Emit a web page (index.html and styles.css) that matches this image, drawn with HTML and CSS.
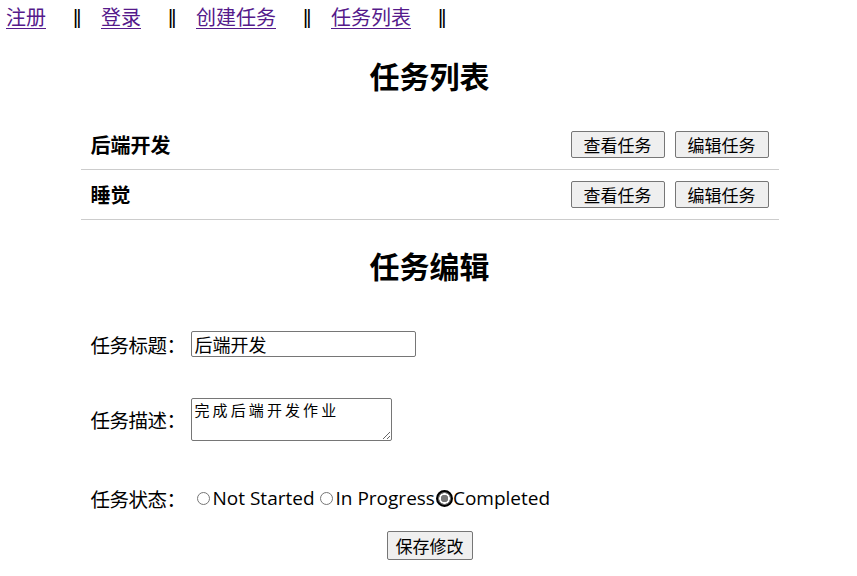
FILE: index.html
```html
<!DOCTYPE html>
<html lang="zh">
<head>
<meta charset="utf-8">
<title>任务</title>
<link rel="stylesheet" href="styles.css">
</head>
<body>
<nav class="nav">
  <a href="#" class="nav-link">注册</a><span class="sep">||</span>
  <a href="#" class="nav-link">登录</a><span class="sep">||</span>
  <a href="#" class="nav-link">创建任务</a><span class="sep">||</span>
  <a href="#" class="nav-link">任务列表</a><span class="sep">||</span>
</nav>
<main class="main">
  <h2 class="title">任务列表</h2>
  <ul class="task-list">
    <li class="task-row">
      <span class="task-name">后端开发</span>
      <span class="actions"><button class="btn">查看任务</button><button class="btn">编辑任务</button></span>
    </li>
    <li class="task-row">
      <span class="task-name">睡觉</span>
      <span class="actions"><button class="btn">查看任务</button><button class="btn">编辑任务</button></span>
    </li>
  </ul>
  <h2 class="title title-edit">任务编辑</h2>
  <form class="form">
    <div class="field">
      <label class="label">任务标题：</label>
      <input class="input" type="text" value="后端开发">
    </div>
    <div class="field field-desc">
      <label class="label">任务描述：</label>
      <textarea class="textarea">完成后端开发作业</textarea>
    </div>
    <div class="field field-status">
      <label class="label">任务状态：</label>
      <span class="radios">
        <label class="radio"><input type="radio" name="s" class="radio-input">Not Started</label>
        <label class="radio"><input type="radio" name="s" class="radio-input">In Progress</label>
        <label class="radio"><input type="radio" name="s" class="radio-input" checked>Completed</label>
      </span>
    </div>
    <div class="submit-row"><button type="button" class="btn btn-save">保存修改</button></div>
  </form>
</main>
</body>
</html>
```
FILE: styles.css
```css
html, body {
  margin: 0;
  padding: 0;
  background: #fff;
  color: #000;
  font-family: "Noto Sans", "Noto Sans CJK SC", sans-serif;
}
.nav {
  display: flex;
  align-items: center;
  padding: 5px 6px 0;
  height: 25px;
  font-size: 20px;
  line-height: 25px;
}
.nav-link {
  color: #551a8b;
  text-decoration: underline;
  text-underline-offset: 3px;
  text-decoration-thickness: 1px;
}
.sep {
  display: inline-block;
  width: 6px;
  text-align: center;
  font-family: "Liberation Sans", sans-serif;
  font-size: 20px;
  letter-spacing: -2px;
  margin: 0 22px 0 27px;
  white-space: nowrap;
}
.main {
  width: 698px;
  margin: 0 auto;
  padding-left: 2px;
}
.title {
  text-align: center;
  font-size: 30px;
  font-weight: bold;
  margin: 0;
  line-height: 40px;
}
.main > .title:first-child {
  margin-top: 27px;
}
.task-list {
  list-style: none;
  margin: 23px 0 0;
  padding: 0;
}
.task-row {
  display: flex;
  justify-content: space-between;
  align-items: center;
  padding: 10px 10px 11px;
  height: 28px;
  border-bottom: 1px solid #ccc;
}
.task-name {
  font-size: 20px;
  font-weight: bold;
}
.actions {
  display: flex;
  gap: 10px;
}
.btn {
  font-family: "Noto Sans CJK SC", sans-serif;
  font-size: 17px;
  height: 27px;
  padding: 0 12px;
  background: #efefef;
  border: 1px solid #767676;
  border-radius: 2px;
  color: #000;
  line-height: 25px;
}
.title-edit {
  margin-top: 27px;
}
.form {
  margin-top: 44px;
  padding-left: 10px;
  font-size: 19px;
}
.field {
  display: flex;
  align-items: center;
  height: 26px;
}
.label {
  width: 100px;
  font-family: "Noto Sans CJK SC", sans-serif;
  font-size: 19.5px;
  letter-spacing: -0.5px;
}
.input {
  box-sizing: border-box;
  width: 225px;
  height: 26px;
  font-size: 18px;
  font-family: "Noto Sans CJK SC", sans-serif;
  padding: 0 3px;
  border: 1px solid #767676;
  border-radius: 2px;
}
.field-desc {
  margin-top: 41px;
  height: 43px;
}
.textarea {
  box-sizing: border-box;
  width: 201px;
  height: 43px;
  font-family: "Noto Sans CJK SC", monospace;
  font-size: 15px;
  letter-spacing: 3.1px;
  line-height: 20px;
  padding: 1px 3px;
  border: 1px solid #767676;
  border-radius: 2px;
  resize: vertical;
}
.field-status {
  margin-top: 44px;
}
.radios {
  display: flex;
  align-items: center;
  font-family: "Open Sans", "Noto Sans", sans-serif;
  font-size: 19px;
  margin-left: 5px;
}
.radio {
  display: flex;
  align-items: center;
}
.radio-input {
  appearance: none;
  -webkit-appearance: none;
  box-sizing: border-box;
  width: 13px;
  height: 13px;
  margin: 1px 3px 0 5px;
  border: 1px solid #767676;
  border-radius: 50%;
  background: #fff;
}
.radio:first-child .radio-input {
  margin-left: 1px;
}
.radio-input:checked {
  width: 17px;
  height: 17px;
  margin: 1px 0 0 1px;
  border: 2px solid #000;
  background: radial-gradient(circle, #767676 0 3.5px, #fff 4px 5px, #767676 5.5px);
}
.submit-row {
  display: flex;
  justify-content: center;
  margin-top: 20px;
  padding-right: 10px;
}
.btn-save {
  height: 29px;
  font-size: 17px;
  padding: 0 8px;
}
```
